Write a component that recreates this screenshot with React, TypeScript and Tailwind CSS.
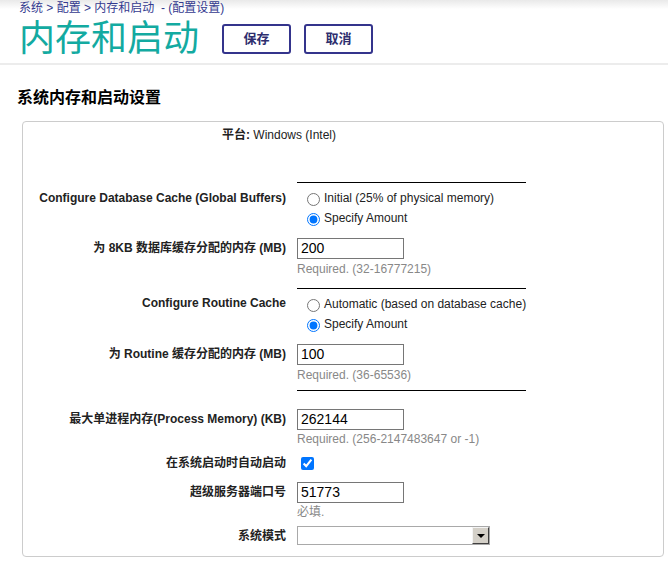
import React from "react";

const font = {
  fontFamily: '"Liberation Sans", Arial, "Noto Sans CJK SC", sans-serif',
};

function Label({ children }: { children: React.ReactNode }) {
  return (
    <div className="w-[274px] shrink-0 pr-[11px] text-right text-[12px] font-bold leading-[16px] text-[#222]">
      {children}
    </div>
  );
}

function Hint({ children }: { children: React.ReactNode }) {
  return (
    <div className="h-[16px] text-[12px] leading-[16px] text-[#888]">
      {children}
    </div>
  );
}

function TextBox({ value }: { value: string }) {
  return (
    <input
      defaultValue={value}
      className="box-border h-[21px] w-[107px] border border-[#767676] bg-white px-[3px] text-[14px] leading-[19px] text-black outline-none"
    />
  );
}

function Rule() {
  return (
    <div className="flex">
      <div className="w-[274px] shrink-0" />
      <div className="h-px w-[229px] bg-black" />
    </div>
  );
}

function Radio({
  label,
  group,
  checked,
}: {
  label: string;
  group: string;
  checked?: boolean;
}) {
  return (
    <label className="flex h-[20px] items-center text-[12px] text-[#222]">
      <input
        type="radio"
        name={group}
        defaultChecked={checked}
        className="m-0 ml-[10px] mr-[4px] mt-[3px] h-[13px] w-[13px]"
      />
      {label}
    </label>
  );
}

export default function App() {
  return (
    <div className="min-h-[561px] w-[668px] bg-white" style={font}>
      <div className="bg-[linear-gradient(#e9e9e9,#ffffff_9px)] px-[19px] pt-[1px]">
        <div className="text-[12px] leading-[14px] text-[#343a8f]">
          系统 &gt; 配置 &gt; 内存和启动 &nbsp;- (配置设置)
        </div>
        <div className="mt-[2px] flex items-center">
          <div className="text-[36px] leading-[44px] text-[#13aaa1]">
            内存和启动
          </div>
          <button className="ml-[23px] h-[30px] w-[69px] rounded-[3px] border-2 border-[#34348c] text-[13px] font-bold text-[#2e2e6e]">
            保存
          </button>
          <button className="ml-[13px] h-[30px] w-[69px] rounded-[3px] border-2 border-[#34348c] text-[13px] font-bold text-[#2e2e6e]">
            取消
          </button>
        </div>
      </div>
      <div className="mt-[2px] h-[2px] bg-[#ececec]" />

      <h2 className="mt-[22px] pl-[17px] text-[16px] font-bold leading-[22px] text-black">
        系统内存和启动设置
      </h2>

      <div className="ml-[22px] mt-[12px] h-[436px] w-[642px] rounded-[4px] border border-[#cccccc]">
        <div className="pl-[199px] pt-[5px] text-[12px] leading-[16px] text-[#222]">
          <b>平台:</b> Windows (Intel)
        </div>

        <div className="mt-[39px]">
          <Rule />
        </div>

        <div className="mt-[5px] flex">
          <div className="pt-[2px]">
            <Label>Configure Database Cache (Global Buffers)</Label>
          </div>
          <div>
            <Radio group="dbcache" label="Initial (25% of physical memory)" />
            <Radio group="dbcache" label="Specify Amount" checked />
          </div>
        </div>

        <div className="mt-[8px] flex">
          <div className="pt-[4px]">
            <Label>为 8KB 数据库缓存分配的内存 (MB)</Label>
          </div>
          <div>
            <TextBox value="200" />
            <div className="mt-px">
              <Hint>Required. (32-16777215)</Hint>
            </div>
          </div>
        </div>

        <div className="mt-[11px]">
          <Rule />
        </div>

        <div className="mt-[5px] flex">
          <div className="pt-[1px]">
            <Label>Configure Routine Cache</Label>
          </div>
          <div>
            <Radio
              group="routine"
              label="Automatic (based on database cache)"
            />
            <Radio group="routine" label="Specify Amount" checked />
          </div>
        </div>

        <div className="mt-[8px] flex">
          <div className="pt-[4px]">
            <Label>为 Routine 缓存分配的内存 (MB)</Label>
          </div>
          <div>
            <TextBox value="100" />
            <div className="mt-px">
              <Hint>Required. (36-65536)</Hint>
            </div>
          </div>
        </div>

        <div className="mt-[7px]">
          <Rule />
        </div>

        <div className="mt-[16px] flex">
          <div className="pt-[4px]">
            <Label>最大单进程内存(Process Memory) (KB)</Label>
          </div>
          <div>
            <TextBox value="262144" />
            <Hint>Required. (256-2147483647 or -1)</Hint>
          </div>
        </div>

        <div className="mt-[8px] flex h-[16px] items-center">
          <Label>在系统启动时自动启动</Label>
          <input
            type="checkbox"
            defaultChecked
            className="m-0 ml-[4px] h-[13px] w-[13px]"
          />
        </div>

        <div className="mt-[9px] flex">
          <div className="pt-[4px]">
            <Label>超级服务器端口号</Label>
          </div>
          <div>
            <TextBox value="51773" />
            <Hint>必填.</Hint>
          </div>
        </div>

        <div className="mt-[6px] flex items-center">
          <Label>系统模式</Label>
          <div className="box-border flex h-[19px] w-[193px] justify-end border border-[#a9a9a9] bg-white">
            <div className="flex h-[17px] w-[17px] items-center justify-center border border-b-[#404040] border-l-[#f4f4f4] border-r-[#404040] border-t-[#f4f4f4] bg-[#d4d0c8]">
              <div className="h-0 w-0 border-x-[4px] border-t-[4px] border-x-transparent border-t-black" />
            </div>
          </div>
        </div>
      </div>
    </div>
  );
}
